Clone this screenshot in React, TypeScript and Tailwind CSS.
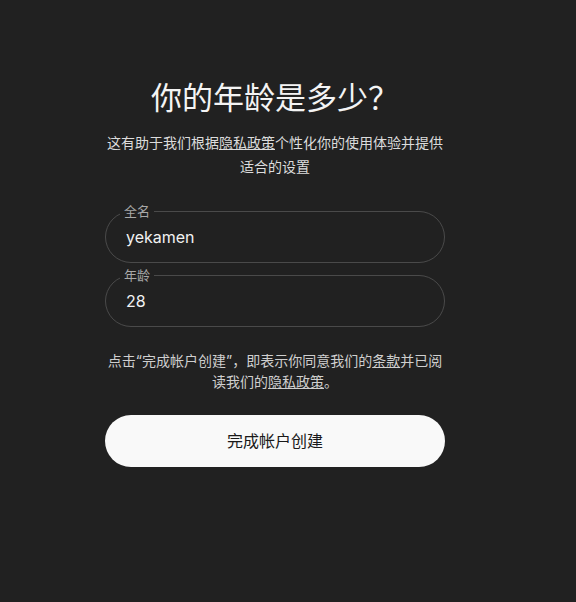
import React from "react";

const font = { fontFamily: 'Inter, "Noto Sans CJK SC", sans-serif' };

function Field({ label, value }: { label: string; value: string }) {
  return (
    <div className="relative h-[52px] w-full rounded-full border border-[#4a4a4a] flex items-center pl-[20px]">
      <span className="absolute left-[14px] top-[-9px] bg-[#212121] px-[4px] text-[13px] leading-[16px] text-[#a8a8a8]">
        {label}
      </span>
      <span className="text-[16px] text-[#f2f2f2]">{value}</span>
    </div>
  );
}

export default function App() {
  return (
    <div className="min-h-[602px] w-full bg-[#212121]" style={font}>
      <div className="w-[550px] flex flex-col items-center pt-[78px]">
        <div className="w-[340px] flex flex-col items-center">
          <h1 className="text-[31px] leading-[40px] text-[#f4f4f4] font-normal">你的年龄是多少？</h1>
          <p className="mt-[13px] text-center text-[14px] leading-[24px] text-[#dcdcdc]">
            这有助于我们根据<span className="underline">隐私政策</span>个性化你的使用体验并提供适合的设置
          </p>
          <div className="mt-[32px] w-full flex flex-col gap-[12px]">
            <Field label="全名" value="yekamen" />
            <Field label="年龄" value="28" />
          </div>
          <p className="mt-[23px] text-center text-[14px] leading-[21px] text-[#cfcfcf]">
            点击“完成帐户创建”，即表示你同意我们的<span className="underline">条款</span>并已阅读我们的<span className="underline">隐私政策</span>。
          </p>
          <button className="mt-[23px] h-[52px] w-full rounded-full bg-[#f9f9f9] text-[16px] text-[#1a1a1a]">
            完成帐户创建
          </button>
        </div>
      </div>
    </div>
  );
}
